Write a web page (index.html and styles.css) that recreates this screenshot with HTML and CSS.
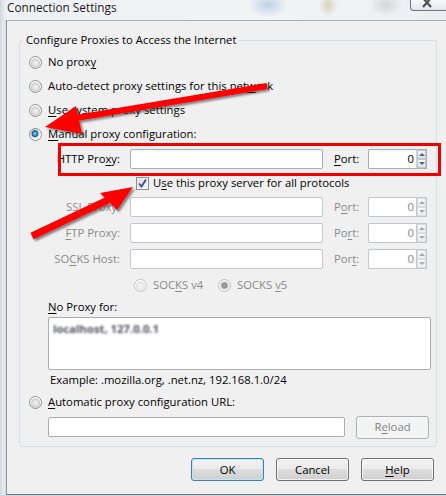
FILE: index.html
```html
<!DOCTYPE html>
<html>
<head>
<meta charset="utf-8">
<link rel="stylesheet" href="styles.css">
</head>
<body>
<div class="window">
  <div class="titlebar">
    <span class="title">Connection Settings</span>
    <div class="close-btn">
      <svg width="14" height="9" viewBox="0 0 14 9"><path d="M3 -2 L11 7 M11 -2 L3 7" stroke="#4a4f55" stroke-width="2.2" fill="none"/></svg>
    </div>
  </div>
  <div class="main">
    <div class="frame-left"></div>
    <div class="client">
      <fieldset class="group">
        <legend>Configure Proxies to Access the Internet</legend>
        <div class="opt-row"><span class="radio"></span><span>No prox<u>y</u></span></div>
        <div class="opt-row"><span class="radio"></span><span>Auto-detect proxy settings for this net<u>w</u>ork</span></div>
        <div class="opt-row"><span class="radio"></span><span><u>U</u>se system proxy settings</span></div>
        <div class="opt-row"><span class="radio on"></span><span><u>M</u>anual proxy configuration:</span></div>

        <div class="proxy-row">
          <span class="lbl">HTTP Pro<u>x</u>y:</span>
          <span class="field host"></span>
          <span class="port-lbl"><u>P</u>ort:</span>
          <span class="port"><span class="port-val">0</span><span class="spin"><span class="up"></span><span class="down"></span></span></span>
        </div>
        <div class="check-row"><span class="check"><svg width="11" height="11" viewBox="0 0 11 11"><path d="M2 5.5 L4.5 8.5 L9 1.5" stroke="#3a4c96" stroke-width="1.8" fill="none"/></svg></span><span>U<u>s</u>e this proxy server for all protocols</span></div>
        <div class="proxy-row dis">
          <span class="lbl">SS<u>L</u> Proxy:</span>
          <span class="field host"></span>
          <span class="port-lbl">P<u>o</u>rt:</span>
          <span class="port"><span class="port-val">0</span><span class="spin"><span class="up"></span><span class="down"></span></span></span>
        </div>
        <div class="proxy-row dis">
          <span class="lbl"><u>F</u>TP Proxy:</span>
          <span class="field host"></span>
          <span class="port-lbl">Po<u>r</u>t:</span>
          <span class="port"><span class="port-val">0</span><span class="spin"><span class="up"></span><span class="down"></span></span></span>
        </div>
        <div class="proxy-row dis">
          <span class="lbl">SO<u>C</u>KS Host:</span>
          <span class="field host"></span>
          <span class="port-lbl">Por<u>t</u>:</span>
          <span class="port"><span class="port-val">0</span><span class="spin"><span class="up"></span><span class="down"></span></span></span>
        </div>
        <div class="socks-row dis">
          <span class="socks-opt"><span class="radio off-dis"></span><span>SOC<u>K</u>S v4</span></span>
          <span class="socks-opt"><span class="radio on-dis"></span><span>SOCKS <u>v</u>5</span></span>
        </div>
        <div class="np-label"><span><u>N</u>o Proxy for:</span></div>
        <div class="textarea"><span class="blur">localhost, 127.0.0.1</span></div>
        <div class="example">Example: .mozilla.org, .net.nz, 192.168.1.0/24</div>
        <div class="opt-row"><span class="radio"></span><span><u>A</u>utomatic proxy configuration URL:</span></div>
        <div class="url-row">
          <span class="field url"></span>
          <span class="btn reload">R<u>e</u>load</span>
        </div>
      </fieldset>
      <div class="buttons">
        <span class="btn default">OK</span>
        <span class="btn">Cancel</span>
        <span class="btn"><u>H</u>elp</span>
      </div>
    </div>
  </div>
  <div class="frame-bottom"></div>

  <svg class="annotations" width="446" height="496" viewBox="0 0 446 496">
    <defs>
      <filter id="sh" x="-20%" y="-20%" width="140%" height="140%">
        <feDropShadow dx="2" dy="2" stdDeviation="1.3" flood-color="#222" flood-opacity="0.55"/>
      </filter>
    </defs>
    <rect x="59.5" y="144.5" width="380" height="30" fill="none" stroke="#f00000" stroke-width="3"/>
    <g filter="url(#sh)" fill="#ff0000">
      <path d="M267 86 L76 118" stroke="#ff0000" stroke-width="6" stroke-linecap="butt"/>
      <polygon points="45,127 76,106 82,134"/>
      <path d="M32 236 L108 200" stroke="#ff0000" stroke-width="7" stroke-linecap="butt"/>
      <polygon points="133,187 100,193 117,210"/>
    </g>
  </svg>
</div>
</body>
</html>
```
FILE: styles.css
```css
* { box-sizing: border-box; }
html, body { margin: 0; padding: 0; }
body {
  width: 446px;
  height: 496px;
  overflow: hidden;
  font-family: "Open Sans", "Noto Sans", sans-serif;
  font-size: 11.3px;
  line-height: 16px;
  color: #000;
  background: #dfe5eb;
}
u { text-decoration: underline; text-underline-offset: 2px; }

.window {
  position: relative;
  width: 446px;
  height: 496px;
  display: flex;
  flex-direction: column;
}

.titlebar {
  height: 20px;
  flex: none;
  display: flex;
  justify-content: space-between;
  align-items: flex-start;
  background:
    radial-gradient(ellipse 20px 12px at 268px 5px, rgba(120,160,205,0.4), rgba(120,160,205,0) 100%),
    radial-gradient(ellipse 9px 12px at 328px 5px, rgba(190,170,110,0.45), rgba(190,170,110,0) 100%),
    radial-gradient(ellipse 16px 11px at 386px 5px, rgba(150,150,150,0.3), rgba(150,150,150,0) 100%),
    linear-gradient(90deg, #d3d9df 0, #eef1f4 6px, #f1f3f5 60%, #eceff2 100%);
}
.title {
  padding-left: 7px;
  font-size: 11.8px;
  line-height: 15px;
  color: #1c1c1c;
  white-space: nowrap;
}
.close-btn {
  width: 36px;
  height: 11px;
  border: 1px solid #6c747d;
  border-top: none;
  border-right: none;
  border-bottom-left-radius: 4px;
  background: linear-gradient(#f7f8fa, #e3e7eb);
  display: flex;
  justify-content: center;
  align-items: flex-start;
  padding-right: 4px;
}

.main {
  display: flex;
  height: 475px;
  flex: none;
}
.frame-left {
  width: 6px;
  background: linear-gradient(90deg, #cdd4db, #e8ecf0 50%, #d6dce2);
}
.client {
  flex: 1;
  background: #f0f0f0;
  border-left: 1px solid #8d939a;
  border-top: 1px solid #a7aeb6;
  border-bottom: 1px solid #6f757c;
  padding: 11px 0 0 12px;
}
.frame-bottom {
  height: 1px;
  background: #cfd6dd;
}

.group {
  margin: 0;
  width: 418px;
  padding: 2px 0 6px 0;
  border: 1px solid #d5dfe5;
  border-radius: 3px;
  min-inline-size: 0;
}
.group legend {
  margin-left: 3px;
  padding: 0 3px;
  line-height: 16px;
  white-space: nowrap;
}

.opt-row {
  height: 24px;
  display: flex;
  align-items: center;
  padding-left: 9px;
  gap: 6px;
  white-space: nowrap;
}

.radio {
  flex: none;
  width: 13px;
  height: 13px;
  border-radius: 50%;
  border: 1px solid #8b8e91;
  background: radial-gradient(circle at 50% 55%, #f3f3f3 0, #e2e2e2 2.5px, #cbcbcb 4.4px, #fbfbfb 4.9px, #ffffff 6px);
}
.radio.on {
  background: radial-gradient(circle at 45% 42%, #a6e0fb 0, #3a97d3 1.6px, #1a5f92 3.1px, #bdbdbd 3.6px, #e6e6e6 4.5px, #fcfcfc 5px, #fff 6px);
}
.radio.off-dis {
  border-color: #c4c6c8;
  background: radial-gradient(circle at 50% 55%, #f7f7f7 0, #ececec 3px, #e0e0e0 4.4px, #fbfbfb 4.9px, #fff 6px);
}
.radio.on-dis {
  border-color: #b9bbbd;
  background: radial-gradient(circle at 50% 50%, #a3a3a3 0, #8f8f8f 2.6px, #cfcfcf 3.4px, #ececec 4.5px, #fbfbfb 5px, #fff 6px);
}

.proxy-row {
  height: 26px;
  display: flex;
  align-items: center;
  white-space: nowrap;
}
.lbl {
  width: 100px;
  margin-right: 10px;
  text-align: right;
}
.field {
  display: block;
  height: 20px;
  border: 1px solid #abadb3;
  border-radius: 2px;
  background: #fff;
}
.host { width: 193px; }
.port-lbl {
  margin-left: 11px;
  width: 34px;
}
.port {
  width: 59px;
  height: 20px;
  display: flex;
}
.port-val {
  flex: 1;
  border: 1px solid #abadb3;
  border-right: none;
  border-radius: 2px 0 0 2px;
  background: #fff;
  text-align: right;
  padding-right: 2px;
  line-height: 18px;
}
.spin {
  width: 11px;
  display: flex;
  flex-direction: column;
  border: 1px solid #abadb3;
  border-left-color: #d0d3d7;
  background: #fff;
}
.spin span {
  flex: 1;
  display: flex;
  align-items: center;
  justify-content: center;
  border: 1px solid #c1c6cc;
  background: linear-gradient(#f6f7f8, #dfe2e6);
}
.spin .up::after {
  content: "";
  border-left: 3px solid transparent;
  border-right: 3px solid transparent;
  border-bottom: 3px solid #4f6290;
}
.spin .down::after {
  content: "";
  border-left: 3px solid transparent;
  border-right: 3px solid transparent;
  border-top: 3px solid #4f6290;
}

.dis { color: #8a8a8a; }
.dis .field, .dis .port-val { border-color: #c3c6ca; }
.dis .spin { border-color: #c3c6ca; }
.dis .spin span { border-color: #dadcdf; background: linear-gradient(#f8f8f8, #eeeeee); }
.dis .spin .up::after { border-bottom-color: #a9a9a9; }
.dis .spin .down::after { border-top-color: #a9a9a9; }

.check-row {
  height: 22px;
  display: flex;
  align-items: center;
  padding-left: 116px;
  gap: 4px;
  white-space: nowrap;
}
.check {
  flex: none;
  width: 13px;
  height: 13px;
  border: 1px solid #8b8e91;
  background: linear-gradient(135deg, #dcdcdc, #f8f8f8);
  box-shadow: inset 0 0 0 1px #f4f4f4;
  display: flex;
  align-items: center;
  justify-content: center;
}

.socks-row {
  height: 26px;
  display: flex;
  align-items: center;
  padding-left: 114px;
  white-space: nowrap;
}
.socks-opt {
  width: 84px;
  display: flex;
  align-items: center;
  gap: 6px;
}

.np-label {
  height: 18px;
  padding-left: 28px;
  display: flex;
  align-items: center;
}
.textarea {
  margin: 1px 0 0 28px;
  width: 383px;
  height: 53px;
  border: 1px solid #abadb3;
  border-radius: 2px;
  background: #fff;
  padding: 3px 0 0 4px;
}
.blur {
  color: #505060;
  font-weight: 700;
  filter: blur(1.1px);
  display: inline-block;
}
.example {
  height: 20px;
  padding-left: 30px;
  display: flex;
  align-items: center;
  white-space: nowrap;
}
.url-row {
  height: 26px;
  display: flex;
  align-items: center;
  padding-left: 28px;
  gap: 11px;
}
.url { width: 297px; }

.btn {
  width: 73px;
  height: 23px;
  border: 1px solid #707070;
  border-radius: 3px;
  background: linear-gradient(#f2f2f2 0%, #ebebeb 45%, #dddddd 50%, #cfcfcf 100%);
  box-shadow: inset 0 0 0 1px rgba(255,255,255,0.75);
  display: flex;
  align-items: center;
  justify-content: center;
  white-space: nowrap;
}
.btn.default {
  border-color: #3c7fb1;
  box-shadow: inset 0 0 0 1px #bfe6f8;
}
.btn.reload {
  border-color: #adb2b5;
  background: #f4f4f4;
  box-shadow: none;
  color: #838383;
}
.buttons {
  display: flex;
  justify-content: flex-end;
  gap: 12px;
  margin-top: 11px;
  padding-right: 12px;
}

.annotations {
  position: absolute;
  left: 0;
  top: 0;
  pointer-events: none;
}
```
